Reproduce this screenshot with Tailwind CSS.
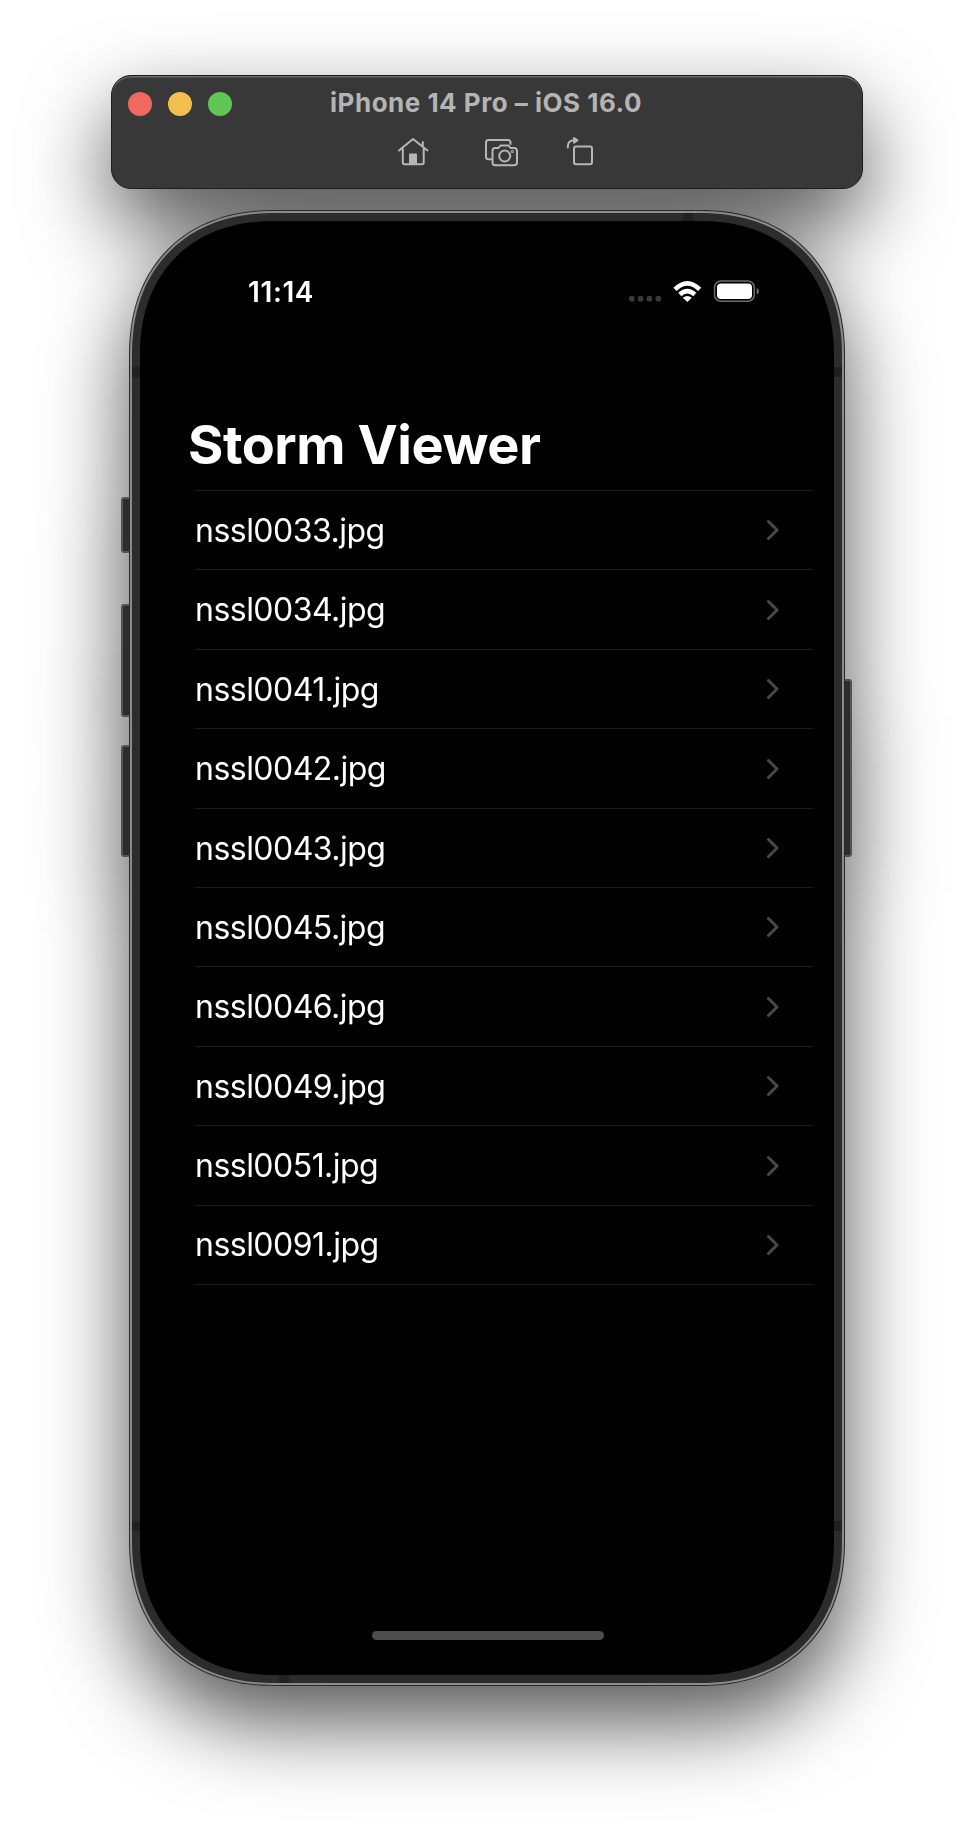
<!DOCTYPE html>
<html lang="en">
<head>
<meta charset="utf-8">
<title>Simulator</title>
<script src="https://cdn.jsdelivr.net/npm/@tailwindcss/browser@4"></script>
</head>
<body class="bg-white font-['Inter',sans-serif]">
<main class="w-[974px] h-[1836px] overflow-hidden pt-[75px]">
<div class="flex flex-col items-center drop-shadow-[0_36px_42px_rgba(0,0,0,0.67)]">

<header class="w-[752px] h-[114px] rounded-[20px] bg-[#383838] border border-[#1c1f1f] shadow-[inset_0_1.5px_0.5px_#6a6a6a] flex flex-col">
  <div class="grid grid-cols-[1fr_auto_1fr] items-start pl-4 pr-[18px] pt-4 h-10">
    <div class="flex gap-4"><span class="size-6 rounded-full bg-[#ee6a5f]"></span><span class="size-6 rounded-full bg-[#f5bf4f]"></span><span class="size-6 rounded-full bg-[#61c554]"></span></div>
    <h1 class="text-[26px] leading-[22px] tracking-[0.5px] font-bold text-[#b4b4b4] whitespace-nowrap">iPhone 14 Pro – iOS 16.0</h1>
    <span></span>
  </div>
  <div class="h-[46px] pt-[12px] pl-[283px]">
  <svg class="block" width="220" height="46" viewBox="395 128 220 46" fill="none" stroke="#b6b6b6" stroke-width="2" stroke-linecap="round" stroke-linejoin="round">
    <path d="M399 150.500 413 139 427.500 150.500M402.800 149V162.500Q402.800 164.300 404.600 164.300H422Q423.700 164.300 423.700 162.500V149M422.800 146.500V142"/><path d="M410 164V154.500H416V164Z" fill="#b6b6b6"/>
    <path d="M491 159.200H488.500Q486 159.200 486 156.700V142.500Q486 140 488.500 140H508Q510.500 140 510.500 142.500V144"/>
    <path d="M495 148H498.500L500.500 145.500H508.500L510.500 148H514Q517 148 517 151V162.300Q517 165.200 514 165.200H495Q492.500 165.200 492.500 162.300V151Q492.500 148 495 148Z"/>
    <circle cx="504.700" cy="156" r="5.500"/><circle cx="512.300" cy="151.500" r=".5"/>
    <rect x="574" y="146.500" width="18" height="17.800" rx="2"/><path d="M567.800 147.500Q567.500 140.500 574 140.300"/><path d="M574 138V142.800L577.500 140.300Z" fill="#b6b6b6"/>
  </svg>
  </div>
</header>

<section class="relative mt-[21px] w-[716px] h-[1476px]">
  <i class="absolute -left-[8px] top-[287px] w-[10px] h-[56px] rounded-[3px] bg-[#2c2c2c] border-2 border-[#555]"></i>
  <i class="absolute -left-[8px] top-[394px] w-[10px] h-[113px] rounded-[3px] bg-[#2c2c2c] border-2 border-[#555]"></i>
  <i class="absolute -left-[8px] top-[535px] w-[10px] h-[112px] rounded-[3px] bg-[#2c2c2c] border-2 border-[#555]"></i>
  <i class="absolute -right-[7px] top-[469px] w-[10px] h-[178px] rounded-[3px] bg-[#2c2c2c] border-2 border-[#555]"></i>
  <div class="relative h-full rounded-[130px] supports-[corner-shape:squircle]:rounded-[145px] supports-[corner-shape:squircle]:[corner-shape:superellipse(1.15)] border border-[#2a2a2a] bg-[#8a8a8a] p-[2px]">
   <div class="relative h-full rounded-[127px] supports-[corner-shape:squircle]:rounded-[142px] supports-[corner-shape:squircle]:[corner-shape:superellipse(1.15)] bg-[#2c2c2c] p-2 overflow-hidden">
    <i class="absolute left-0 top-[154px] w-full h-[10px] bg-[#202020]"></i>
    <i class="absolute left-0 top-[1308px] w-full h-[10px] bg-[#202020]"></i>
    <i class="absolute left-[551px] top-0 w-[10px] h-2 bg-[#202020]"></i>
    <i class="absolute left-[147px] bottom-0 w-[10px] h-2 bg-[#202020]"></i>
    <div class="relative h-full rounded-[119px] supports-[corner-shape:squircle]:rounded-[134px] supports-[corner-shape:squircle]:[corner-shape:superellipse(1.15)] bg-black flex flex-col text-white">
      <div class="flex justify-between pt-[55px] pl-[108px] pr-[74px] h-[198px]">
        <time class="text-[28px] leading-[33px] tracking-[0.6px] font-semibold self-start">11:14</time>
        <svg class="block" width="132" height="32" viewBox="628 276 132 32">
          <g fill="#3a3a3a"><rect x="629" y="296" width="5.600" height="5.600" rx="2"/><rect x="637.800" y="296" width="5.600" height="5.600" rx="2"/><rect x="646.600" y="296" width="5.600" height="5.600" rx="2"/><rect x="655.500" y="296" width="5.600" height="5.600" rx="2"/></g>
          <g fill="none" stroke="#fff" stroke-width="4.500"><path d="M675 289.300Q687.300 277.300 699.600 289.300"/><path d="M679.800 294.500Q687.300 287.700 694.800 294.500"/></g>
          <path d="M682.800 297.800Q687.300 294.200 691.800 297.800L687.300 302Z" fill="#fff"/>
          <rect x="714.500" y="281" width="39.800" height="20.300" rx="6.500" fill="none" stroke="#6c6c6c" stroke-width="1.500"/><rect x="717" y="283.500" width="35" height="15.400" rx="4" fill="#fff"/><path d="M756.700 288Q759 289 759 291.300T756.700 294.600Z" fill="#6c6c6c"/>
        </svg>
      </div>
      <h2 class="pl-[48px] h-[71px] text-[54px] leading-[52px] tracking-[-0.45px] font-bold whitespace-nowrap">Storm Viewer</h2>
      <ul id="files" class="ml-[55px] w-[618px] border-t border-[#1b1b1b] text-[32px] tracking-[-0.52px]"></ul>
      <i class="block mt-auto mb-[35px] ml-[232px] w-[232px] h-[9px] rounded-full bg-[#4d4d4d]"></i>
    </div>
   </div>
  </div>
</section>
</div>
</main>
<script>
document.getElementById('files').innerHTML = ['0033','0034','0041','0042','0043','0045','0046','0049','0051','0091'].map(n =>
 `<li class="h-[79.4px] flex items-center justify-between pt-[1.5px] pr-[34px] border-b border-[#1b1b1b]"><span>nssl${n}.jpg</span><svg class="mb-px" width="13" height="22" viewBox="0 0 13 22" fill="none" stroke="#48484a" stroke-width="3" stroke-linecap="round" stroke-linejoin="round"><path d="M2.500 2.500 11 11 2.500 19.500"/></svg></li>`).join('');
</script>
</body>
</html>
